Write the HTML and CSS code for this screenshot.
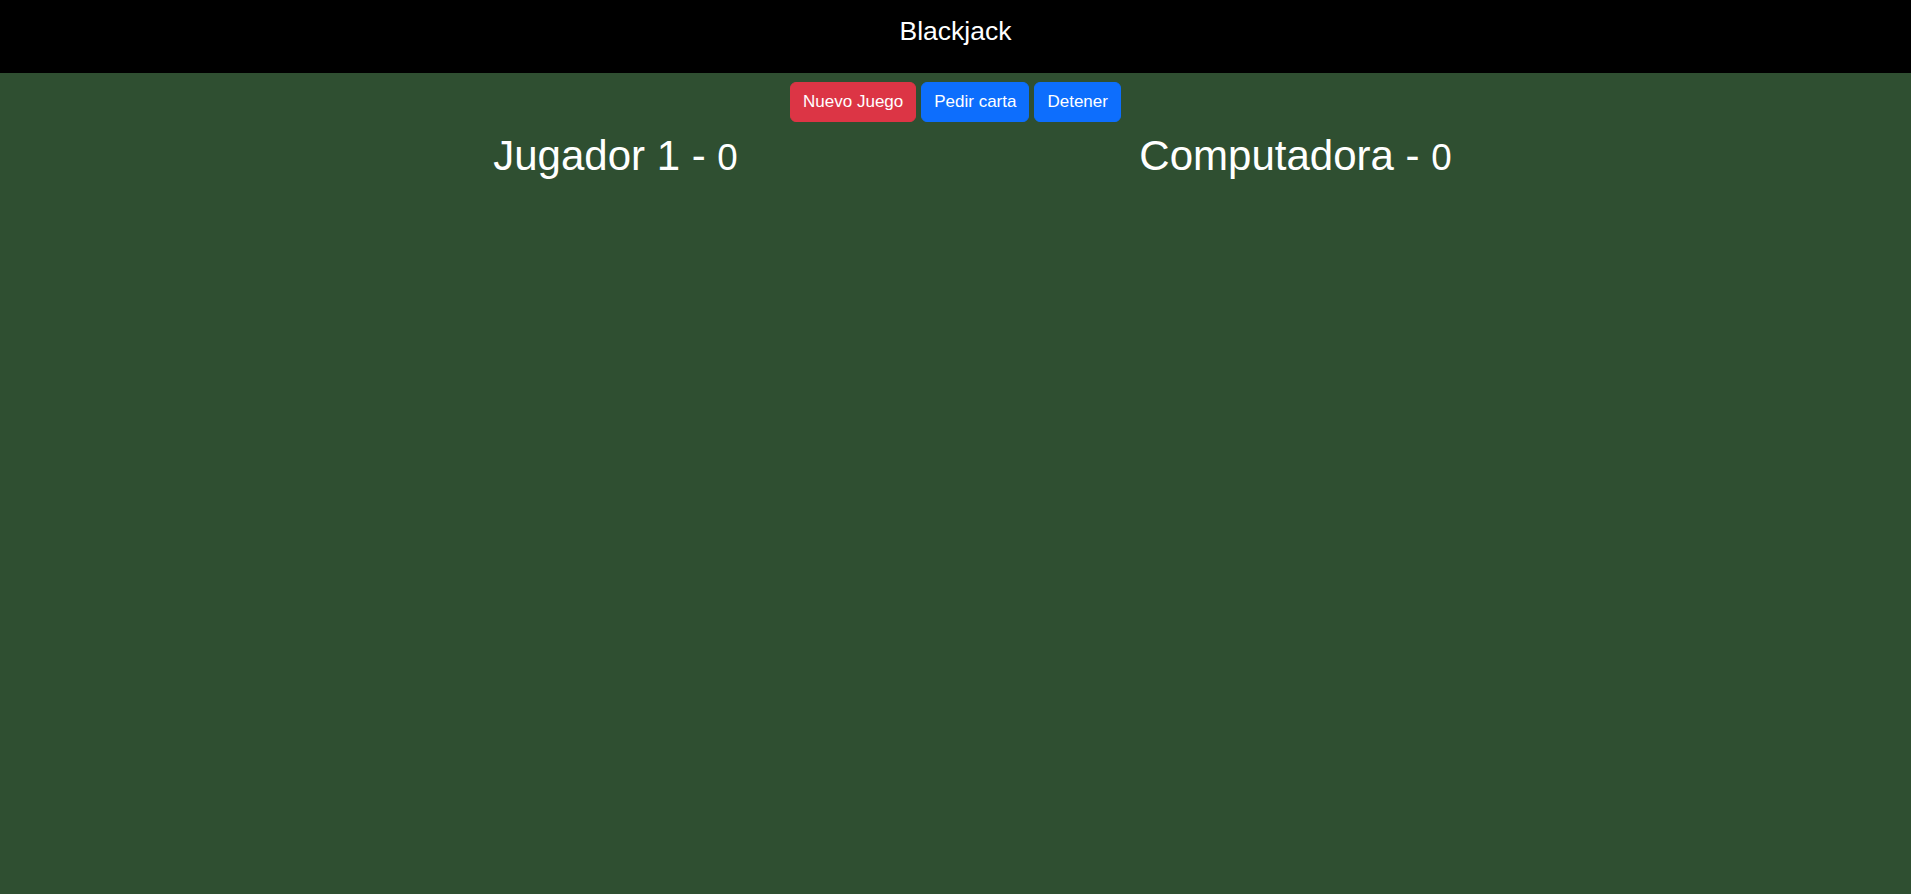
FILE: index.html
```html
<!DOCTYPE html>
<html lang="es">
<head>
<meta charset="utf-8">
<title>Blackjack</title>
<link rel="stylesheet" href="styles.css">
</head>
<body>
<header class="top-bar">
  <span class="title">Blackjack</span>
</header>
<main class="table">
  <div class="controls">
    <button class="btn btn-danger">Nuevo Juego</button>
    <button class="btn btn-primary">Pedir carta</button>
    <button class="btn btn-primary">Detener</button>
  </div>
  <div class="players">
    <section class="player">
      <h1 class="player-name">Jugador 1 - <small>0</small></h1>
      <div class="cards"></div>
    </section>
    <section class="player">
      <h1 class="player-name">Computadora - <small>0</small></h1>
      <div class="cards"></div>
    </section>
  </div>
</main>
</body>
</html>
```
FILE: styles.css
```css
html, body {
  margin: 0;
  padding: 0;
  height: 100%;
}
body {
  background: #2f4f31;
  font-family: "Liberation Sans", Arial, sans-serif;
  color: #fff;
}
.top-bar {
  box-sizing: border-box;
  height: 73px;
  padding-bottom: 10px;
  background: #000;
  display: flex;
  align-items: center;
  justify-content: center;
}
.title {
  font-size: 26.5px;
  line-height: 1.2;
}
.table {
  padding-top: 9px;
}
.controls {
  display: flex;
  justify-content: center;
  gap: 5px;
}
.btn {
  font-family: "Liberation Sans", Arial, sans-serif;
  font-size: 17px;
  line-height: 1.5;
  padding: 6px 12px;
  border: 1px solid transparent;
  border-radius: 6px;
  color: #fff;
  cursor: pointer;
}
.btn-danger {
  background: #dc3545;
  border-color: #dc3545;
}
.btn-primary {
  background: #0d6efd;
  border-color: #0d6efd;
}
.players {
  width: 1360px;
  margin: 9px auto 0;
  display: grid;
  grid-template-columns: 1fr 1fr;
}
.player {
  text-align: center;
}
.player-name {
  margin: 0;
  font-size: 42px;
  font-weight: 400;
  line-height: 1.2;
}
.player-name small {
  font-size: 0.875em;
}
```
